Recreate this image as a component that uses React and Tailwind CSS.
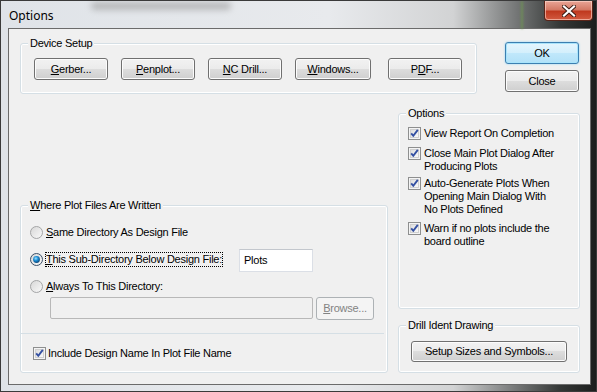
import React from 'react';

// Win7 "Options" dialog — classic controls on an Aero (glass) frame.

const btnBase =
  'flex items-center justify-center rounded-[3px] border text-[11px] leading-[13px] text-black';
const btnNormal =
  'border-[#707070] bg-[linear-gradient(to_bottom,#f2f2f2_0%,#ebebeb_50%,#dddddd_50%,#cfcfcf_100%)] shadow-[inset_0_0_0_1px_#fcfcfc]';

function Btn({ className = '', children }) {
  return <div className={`${btnBase} ${btnNormal} ${className}`}>{children}</div>;
}

function U({ children }) {
  return <span className="underline underline-offset-[1px]">{children}</span>;
}

function Group({ label, className = '', children }) {
  return (
    <div
      className={`relative rounded-[3px] border border-[#d5dfe5] shadow-[inset_0_0_0_1px_#ffffff] ${className}`}
    >
      <span className="absolute -top-[7px] left-[7px] bg-[#f0f0f0] px-[2px] text-[11px] leading-[13px] text-black whitespace-nowrap">
        {label}
      </span>
      {children}
    </div>
  );
}

function Check() {
  return (
    <svg width="13" height="13" viewBox="0 0 13 13" className="shrink-0">
      <defs>
        <linearGradient id="cbg" x1="0" y1="0" x2="1" y2="1">
          <stop offset="0" stopColor="#dcdcdc" />
          <stop offset="1" stopColor="#fbfbfb" />
        </linearGradient>
      </defs>
      <rect x="0.5" y="0.5" width="12" height="12" fill="#f4f4f4" stroke="#8e8f8f" />
      <rect x="2.5" y="2.5" width="8" height="8" fill="url(#cbg)" stroke="#d0d0d0" />
      <path d="M3.2 6.3 L5.3 8.8 L9.8 2.9" fill="none" stroke="#3450a2" strokeWidth="1.9" />
    </svg>
  );
}

function Radio({ on }) {
  return (
    <svg width="13" height="13" viewBox="0 0 13 13" className="shrink-0">
      <defs>
        <linearGradient id="rbg" x1="0" y1="0" x2="1" y2="1">
          <stop offset="0" stopColor="#d6d6d6" />
          <stop offset="1" stopColor="#fafafa" />
        </linearGradient>
        <radialGradient id="rdot" cx="0.4" cy="0.35" r="0.7">
          <stop offset="0" stopColor="#9fe0ff" />
          <stop offset="0.45" stopColor="#1c8fd6" />
          <stop offset="1" stopColor="#0b3f70" />
        </radialGradient>
      </defs>
      <circle cx="6.5" cy="6.5" r="6" fill="url(#rbg)" stroke={on ? '#3c5068' : '#a4a5a6'} />
      {on && <circle cx="6.5" cy="6.5" r="3.4" fill="url(#rdot)" />}
    </svg>
  );
}

function Opt({ className = '', children }) {
  return (
    <div className={`flex items-start ${className}`}>
      <Check />
      <div className="ml-[3px] whitespace-nowrap text-[11px] leading-[13px] text-black">
        {children}
      </div>
    </div>
  );
}

export default function App() {
  return (
    <div className="relative h-[392px] w-[597px] overflow-hidden border border-[#3a3a3a] bg-[linear-gradient(to_right,#dfe3e8_0%,#e8eaed_55%,#d2d3d4_76%,#7a7c7c_86%,#343736_94%,#1c1e1d_100%)] font-['Liberation_Sans',Arial,sans-serif] tracking-[-0.25px]">
      {/* blurred content behind the glass title bar */}
      <div className="pointer-events-none absolute left-[90px] top-[1px] h-[8px] w-[140px] rounded-full bg-[#9a9a9a] opacity-60 blur-[3px]" />
      <div className="pointer-events-none absolute left-[520px] top-0 h-[28px] w-[2px] bg-[#6d9a4e] opacity-70 blur-[1px]" />

      {/* title bar */}
      <div className="flex h-[27px] items-start justify-between">
        <div className="pl-[8px] pt-[8px] font-['Noto_Sans',sans-serif] text-[12px] leading-[14px] tracking-normal text-black">
          Options
        </div>
        <div className="mr-[3px] flex h-[20px] w-[49px] items-center justify-center rounded-b-[4px] border border-t-0 border-[#5a2418] bg-[linear-gradient(to_bottom,#e9a596_0%,#d47a66_45%,#c0391f_55%,#d25a40_100%)] shadow-[inset_0_0_0_1px_rgba(255,220,210,0.6)]">
          <svg width="14" height="12" viewBox="0 0 14 12">
            <path
              d="M2 1.5 L12 10.5 M12 1.5 L2 10.5"
              stroke="#3a1a12"
              strokeWidth="4"
              strokeLinecap="square"
            />
            <path
              d="M2 1.5 L12 10.5 M12 1.5 L2 10.5"
              stroke="#ffffff"
              strokeWidth="2.2"
              strokeLinecap="square"
            />
          </svg>
        </div>
      </div>

      {/* client area */}
      <div className="ml-[7px] flex h-[357px] w-[583px] flex-col border border-[#6b6b6b] bg-[#f0f0f0] pl-[11px]">
        {/* row 1 */}
        <div className="mt-[13px] flex items-start">
          <Group label="Device Setup" className="mt-[1px] h-[51px] w-[457px]">
            <div className="ml-[13px] mt-[14px] flex">
              <Btn className="h-[22px] w-[74px]">
                <U>G</U>erber...
              </Btn>
              <Btn className="ml-[13px] h-[22px] w-[74px]">
                <U>P</U>enplot...
              </Btn>
              <Btn className="ml-[13px] h-[22px] w-[74px]">
                <U>N</U>C Drill...
              </Btn>
              <Btn className="ml-[13px] h-[22px] w-[76px]">
                <U>W</U>indows...
              </Btn>
              <Btn className="ml-[17px] h-[22px] w-[74px]">
                P<U>D</U>F...
              </Btn>
            </div>
          </Group>
          <div className="ml-[28px] flex flex-col">
            <div
              className={`${btnBase} h-[22px] w-[74px] border-[#3c7fb1] bg-[linear-gradient(to_bottom,#e5f6fe_0%,#d3effc_50%,#c1e8fb_50%,#b2e1f8_100%)] shadow-[inset_0_0_0_1px_#a9e4fb,0_0_2px_#7fd0f5]`}
            >
              OK
            </div>
            <Btn className="mt-[6px] h-[22px] w-[74px]">Close</Btn>
          </div>
        </div>

        {/* row 2 */}
        <div className="mt-[19px] flex items-end">
          <Group label={<><U>W</U>here Plot Files Are Written</>} className="h-[168px] w-[368px]">
            <div className="pl-[9px] pt-[20px] text-[11px] leading-[13px] text-black">
              <div className="flex h-[27px] items-start">
                <Radio />
                <span className="ml-[3px] whitespace-nowrap">
                  <U>S</U>ame Directory As Design File
                </span>
              </div>
              <div className="flex h-[27px] items-start">
                <Radio on />
                <span className="-mt-[1px] ml-[2px] whitespace-nowrap border border-dotted border-black">
                  <U>T</U>his Sub-Directory Below Design File:
                </span>
                <div className="-mt-[4px] ml-[16px] flex h-[23px] w-[74px] items-center border border-[#dbdfe6] border-t-[#c3c7cd] bg-white pl-[4px]">
                  Plots
                </div>
              </div>
              <div className="flex h-[17px] items-start">
                <Radio />
                <span className="ml-[3px] whitespace-nowrap">
                  <U>A</U>lways To This Directory:
                </span>
              </div>
              <div className="flex items-start">
                <div className="ml-[20px] h-[22px] w-[263px] rounded-[2px] border border-[#b8b8b8] bg-[#f0f0f0]" />
                <div className="ml-[3px] flex h-[23px] w-[58px] items-center justify-center rounded-[3px] border border-[#adb2b5] bg-[#f4f4f4] text-[#838383]">
                  <U>B</U>rowse...
                </div>
              </div>
            </div>
            <div className="mr-[3px] mt-[13px] h-[1px] bg-[#d5dfe5]" />
            <div className="ml-[12px] mt-[13px] flex items-start text-[11px] leading-[13px] text-black">
              <Check />
              <span className="ml-[2px] whitespace-nowrap">Include Design Name In Plot File Name</span>
            </div>
          </Group>

          <div className="ml-[10px] flex flex-col">
            <Group label="Options" className="h-[196px] w-[182px]">
              <div className="pl-[9px]">
                <Opt className="mt-[13px]">View Report On Completion</Opt>
                <Opt className="mt-[7px]">
                  Close Main Plot Dialog After
                  <br />
                  Producing Plots
                </Opt>
                <Opt className="mt-[4px]">
                  Auto-Generate Plots When
                  <br />
                  Opening Main Dialog With
                  <br />
                  No Plots Defined
                </Opt>
                <Opt className="mt-[6px]">
                  Warn if no plots include the
                  <br />
                  board outline
                </Opt>
              </div>
            </Group>
            <Group label="Drill Ident Drawing" className="mt-[16px] h-[48px] w-[182px]">
              <Btn className="ml-[12px] mt-[15px] h-[21px] w-[156px]">Setup Sizes and Symbols...</Btn>
            </Group>
          </div>
        </div>
      </div>
    </div>
  );
}
